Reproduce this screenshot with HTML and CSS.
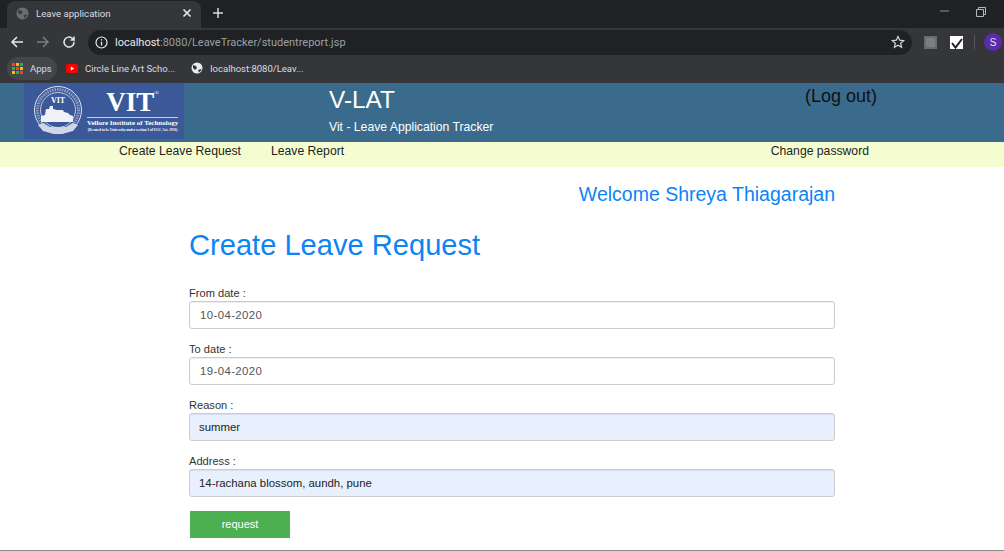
FILE: index.html
```html
<!DOCTYPE html>
<html lang="en">
<head>
    <meta charset="UTF-8">
    <title>Leave application</title>
    <link rel="stylesheet" href="styles.css">
</head>
<body>
    <!-- browser chrome -->
    <div class="tabstrip">
        <div class="tab">
            <svg class="tab-globe" width="13" height="13" viewBox="0 0 14 14"><circle cx="7" cy="7" r="6.500" fill="#6b6d70"/><path d="M3 3l3 1 1 2-2 2-3-2zM8 9l3-1 1 1-3 3z" fill="#3a3b3e"/></svg>
            <span class="tab-title">Leave application</span>
            <svg class="tab-close" width="10" height="10" viewBox="0 0 10 10"><path d="M1.500 1.500l7 7M8.500 1.500l-7 7" stroke="#e8eaed" stroke-width="1.600"/></svg>
        </div>
        <svg class="tab-new" width="12" height="12" viewBox="0 0 12 12"><path d="M6 1v10M1 6h10" stroke="#d5d7da" stroke-width="1.500"/></svg>
        <div class="window-btns">
            <svg width="12" height="12" viewBox="0 0 12 12"><path d="M1 5h9" stroke="#8c8e91" stroke-width="1"/></svg>
            <svg width="12" height="12" viewBox="0 0 12 12"><path d="M1.500 3.500h7v7h-7zM3.500 3.500v-2h7v7h-2" fill="none" stroke="#b5b7ba" stroke-width="1"/></svg>
        </div>
    </div>
    <div class="toolbar">
        <svg class="nav-icon" width="14" height="14" viewBox="0 0 14 14"><path d="M13 7H2M7 2L2 7l5 5" fill="none" stroke="#e8eaed" stroke-width="1.500"/></svg>
        <svg class="nav-icon" width="14" height="14" viewBox="0 0 14 14"><path d="M1 7h11M7 2l5 5-5 5" fill="none" stroke="#7b7d80" stroke-width="1.500"/></svg>
        <svg class="nav-icon" width="14" height="14" viewBox="0 0 14 14"><path d="M12 7a5 5 0 1 1-1.500-3.500L12 5V1.500M12 5H8.500" fill="none" stroke="#e8eaed" stroke-width="1.500"/></svg>
        <div class="omnibox">
            <svg width="13" height="13" viewBox="0 0 13 13"><circle cx="6.500" cy="6.500" r="5.500" fill="none" stroke="#e8eaed" stroke-width="1.200"/><path d="M6.500 5.800v3.700M6.500 3.300v1.300" stroke="#e8eaed" stroke-width="1.300"/></svg>
            <span class="url"><span class="url-host">localhost</span>:8080/LeaveTracker/studentreport.jsp</span>
            <svg class="star" width="14" height="14" viewBox="0 0 14 14"><path d="M7 1.500l1.700 3.700 4 .4-3 2.700.9 4L7 10.300l-3.600 2 .9-4-3-2.700 4-.4z" fill="none" stroke="#d5d7da" stroke-width="1.200"/></svg>
        </div>
        <span class="ext ext-grey"></span>
        <span class="ext ext-check"><svg width="14" height="14" viewBox="0 0 14 14"><path d="M2 7l3.500 4.500L12 3" fill="none" stroke="#202124" stroke-width="2"/></svg></span>
        <span class="toolbar-sep"></span>
        <span class="avatar">S</span>
    </div>
    <div class="bookmarks">
        <div class="bookmark bookmark-apps">
            <span class="apps-grid">
                <i class="r"></i><i class="y"></i><i class="g"></i>
                <i class="g"></i><i class="r"></i><i class="y"></i>
                <i class="y"></i><i class="g"></i><i class="r"></i>
            </span>
            Apps
        </div>
        <div class="bookmark bookmark-yt">
            <svg width="12" height="9" viewBox="0 0 12 9"><rect width="12" height="9" rx="2" fill="#f00"/><path d="M4.800 2.500v4l3.400-2z" fill="#fff"/></svg>
            Circle Line Art Scho...
        </div>
        <div class="bookmark">
            <svg width="12" height="12" viewBox="0 0 12 12"><circle cx="6" cy="6" r="5.500" fill="#e8eaed"/><path d="M2 3l3 1 1 2-2 2-2-2zM7 8l3-1 .5 1-2.500 2.500z" fill="#35363a"/></svg>
            localhost:8080/Leav...
        </div>
    </div>

    <!-- page -->
    <header class="site-header">
        <div class="logo">
            <svg class="logo-seal" width="50" height="50" viewBox="0 0 50 50">
                <circle cx="25" cy="24" r="23.500" fill="none" stroke="#dfe4f0" stroke-width="1"/>
                <circle cx="25" cy="24" r="17.500" fill="none" stroke="#dfe4f0" stroke-width=".8"/>
                <circle cx="25" cy="24" r="20.500" fill="none" stroke="#8f9ec4" stroke-width="3" stroke-dasharray="1.500 1"/>
                <path d="M5 39l5-2 7 4h16l7-4 5 2-5 6-11 3h-8l-11-3z" fill="#cfd6e8"/>
                <path d="M8 36v-6l4-1 1-6h3l1-3h3v3l4 1h6l1 2 4 1 2 2 3 1v6z" fill="#eef1f8"/>
                <text x="25" y="17" class="seal-text">VIT</text>
            </svg>
            <div class="logo-words">
                <div class="logo-big">VIT<sup>®</sup></div>
                <div class="logo-name">Vellore Institute of Technology</div>
                <div class="logo-small">(Deemed to be University under section 3 of UGC Act, 1956)</div>
            </div>
        </div>
        <div class="brand">
            <div class="brand-name">V-LAT</div>
            <div class="brand-sub">Vit - Leave Application Tracker</div>
        </div>
        <a class="logout">(Log out)</a>
    </header>
    <nav class="site-nav">
        <a class="nav-create">Create Leave Request</a>
        <a class="nav-report">Leave Report</a>
        <a class="nav-password">Change password</a>
    </nav>
    <main class="content">
        <div class="welcome">Welcome Shreya Thiagarajan</div>
        <h1>Create Leave Request</h1>
        <form class="leave-form">
            <label>From date :</label>
            <div class="field">10-04-2020</div>
            <label>To date :</label>
            <div class="field">19-04-2020</div>
            <label>Reason :</label>
            <div class="field field-filled">summer</div>
            <label>Address :</label>
            <div class="field field-filled">14-rachana blossom, aundh, pune</div>
            <div class="submit">request</div>
        </form>
    </main>
</body>
</html>
```

FILE: styles.css
```css
* {
    box-sizing: border-box;
}
html, body {
    height: 551px;
    overflow: hidden;
}
body {
    margin: 0;
    background: #fff;
    color: #333;
    font-family: "Liberation Sans", Arial, sans-serif;
    border-bottom: 1px solid #888;
}

/* chrome */
.tabstrip {
    height: 28px;
    background: #202124;
    display: flex;
    align-items: flex-end;
    padding-left: 7px;
}
.tab {
    width: 194px;
    height: 27px;
    background: #35363a;
    border-radius: 8px 8px 0 0;
    display: flex;
    align-items: center;
    padding: 0 9px 3px;
    color: #dadce0;
    font-family: Roboto, sans-serif;
    font-size: 9.600px;
}
.tab-globe {
    margin-right: 7px;
}
.tab-title {
    flex: 1;
}
.tab-new {
    margin: 0 0 9px 11px;
}
.window-btns {
    margin-left: auto;
    align-self: flex-start;
    display: flex;
    gap: 24px;
    padding: 6px 17px 0 0;
}
.toolbar {
    height: 28px;
    background: #35363a;
    display: flex;
    align-items: center;
    padding-left: 10px;
}
.nav-icon {
    margin-right: 12px;
}
.omnibox {
    width: 824px;
    height: 25px;
    background: #202124;
    border-radius: 13px;
    display: flex;
    align-items: center;
    padding: 0 7px;
    font-family: Roboto, sans-serif;
    font-size: 11px;
    color: #9aa0a6;
}
.url {
    margin-left: 7px;
    flex: 1;
}
.url-host {
    color: #e8eaed;
}
.ext {
    display: block;
    width: 13px;
    height: 13px;
}
.ext-grey {
    margin-left: 12px;
    background: #7d7e80;
    border: 2px solid #6b6c6e;
}
.ext-check {
    margin-left: 13px;
    background: #fff;
}
.ext-check svg {
    display: block;
}
.toolbar-sep {
    width: 1px;
    height: 14px;
    background: #55575a;
    margin-left: 11px;
}
.avatar {
    width: 18px;
    height: 18px;
    margin-left: 9px;
    border-radius: 50%;
    background: #5a2ca8;
    color: #e8e0f8;
    font-size: 10px;
    display: flex;
    align-items: center;
    justify-content: center;
}
.bookmarks {
    height: 27px;
    background: #35363a;
    display: flex;
    align-items: center;
    padding: 0 0 3px 7px;
    color: #dadce0;
    font-family: Roboto, sans-serif;
    font-size: 9.500px;
}
.bookmark {
    display: flex;
    align-items: center;
    gap: 7px;
}
.bookmark-apps {
    width: 50px;
    height: 23px;
    background: #45464a;
    border-radius: 12px;
    padding-left: 5px;
    margin-right: 9px;
}
.bookmark-yt {
    margin-right: 16px;
}
.apps-grid {
    display: grid;
    grid-template-columns: repeat(3, 3px);
    gap: 1px;
}
.apps-grid i {
    height: 3px;
    display: block;
}
.apps-grid .r { background: #ea4335; }
.apps-grid .y { background: #fbbc04; }
.apps-grid .g { background: #34a853; }

/* page header */
.site-header {
    height: 59px;
    background: #3a6b8c;
    display: flex;
    padding-left: 24px;
    color: #fff;
}
.logo {
    width: 160px;
    height: 56px;
    background: #3b5998;
    display: flex;
    align-items: center;
    padding-left: 9px;
    gap: 4px;
}
.seal-text {
    fill: #fff;
    font-family: "Liberation Serif", serif;
    font-size: 8px;
    font-weight: bold;
    text-anchor: middle;
}
.logo-words {
    color: #fff;
    font-family: "Liberation Serif", serif;
    text-align: center;
    width: 91px;
    font-weight: bold;
}
.logo-big {
    font-size: 27px;
    line-height: 27px;
    border-bottom: 1px solid #c5cfe4;
    padding-bottom: 1px;
}
.logo-big sup {
    font-size: 6px;
    font-weight: normal;
    vertical-align: 16px;
    line-height: 0;
}
.logo-name {
    font-size: 7px;
    line-height: 9px;
    margin-top: 1px;
    white-space: nowrap;
}
.logo-small {
    font-size: 3.500px;
    line-height: 5px;
    white-space: nowrap;
}
.brand {
    margin-left: 145px;
    padding-top: 1px;
}
.brand-name {
    font-size: 24.400px;
    line-height: 31px;
}
.brand-sub {
    font-size: 12.200px;
    line-height: 16px;
    margin-top: 4px;
}
.logout {
    margin-left: auto;
    margin-right: 127px;
    font-size: 18px;
    line-height: 22px;
    padding-top: 2px;
    color: #111;
}
.site-nav {
    height: 25px;
    background: #f5fdd0;
    display: flex;
    font-size: 12.200px;
    line-height: 18px;
    color: #222;
}
.nav-create {
    margin-left: 119px;
}
.nav-report {
    margin-left: 30px;
}
.nav-password {
    margin-left: auto;
    margin-right: 135px;
}

/* form */
.content {
    width: 646px;
    margin-left: 189px;
}
.welcome {
    text-align: right;
    color: #0d84f5;
    font-size: 19.500px;
    line-height: 23px;
    padding-top: 16px;
}
h1 {
    margin: 21px 0 0;
    color: #0d84f5;
    font-size: 29.100px;
    font-weight: normal;
    line-height: 36px;
}
.leave-form {
    margin-top: 23px;
    display: flex;
    flex-direction: column;
}
label {
    font-size: 11.100px;
    line-height: 15px;
    color: #333;
}
.field {
    height: 28px;
    border: 1px solid #ccc;
    border-radius: 3px;
    box-shadow: inset 0 1px 1px rgba(0,0,0,.075);
    padding: 0 10px;
    font-size: 11.400px;
    letter-spacing: .4px;
    line-height: 26px;
    color: #555;
    margin-bottom: 13px;
}
.field-filled {
    background: #e8f0fe;
    color: #222;
    letter-spacing: 0;
    padding-left: 9px;
}
.submit {
    width: 100px;
    height: 27px;
    margin: 1px 0 0 1px;
    background: #4caf50;
    color: #fff;
    font-size: 11px;
    line-height: 27px;
    text-align: center;
}
```
